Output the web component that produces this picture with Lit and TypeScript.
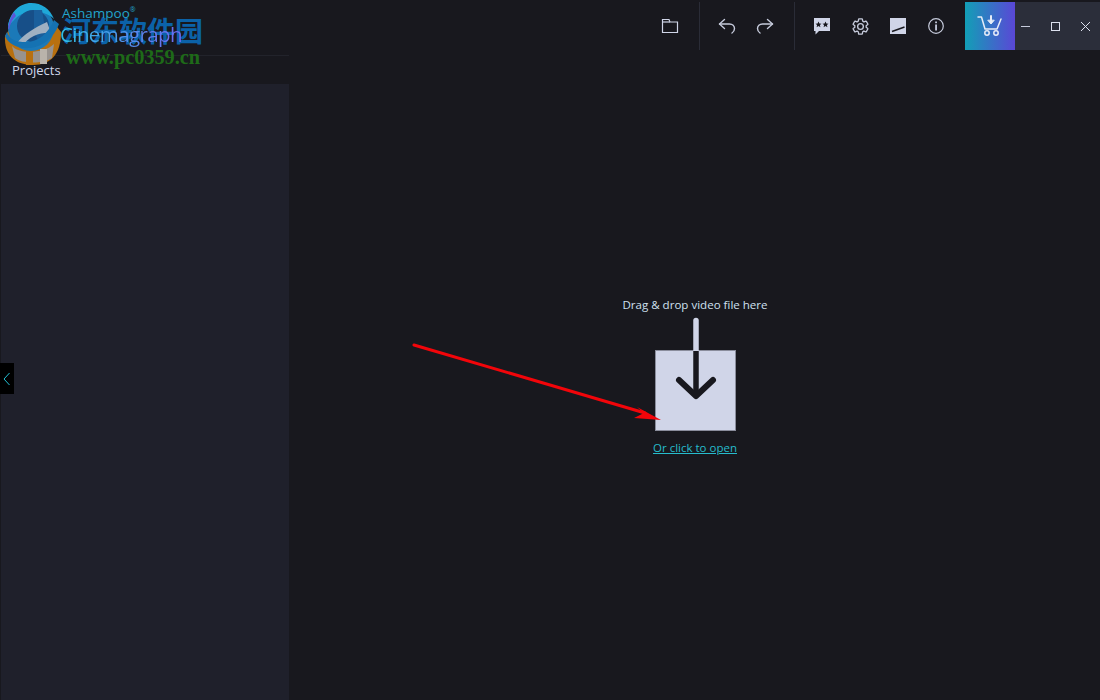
import { LitElement, html, css, svg } from "lit";
import { customElement } from "lit/decorators.js";

const ink = "#d0d5e8";

@customElement("app-root")
export class AppRoot extends LitElement {
  static styles = css`
    :host {
      display: block;
      position: relative;
      width: 1100px;
      height: 700px;
      overflow: hidden;
      background: #18181e;
      color: #d0d5e8;
      font-family: "Open Sans", "Noto Sans", sans-serif;
    }
    .app { display: flex; flex-direction: column; height: 700px; }
    .top { display: flex; height: 50px; padding-top: 2px; box-sizing: border-box; flex: none; }
    .brand { width: 289px; flex: none; }
    .spacer { flex: 1; }
    .tools { display: flex; align-items: stretch; }
    .tool { width: 38px; height: 48px; display: flex; align-items: center; justify-content: center; }
    .tool svg { display: block; }
    .sep { width: 1px; background: #2a2c37; height: 48px; margin: 0 8px 0 10px; }
    .cart {
      width: 50px; height: 48px; margin-left: 10px;
      background: linear-gradient(90deg, #129fb6, #5a47d6);
      display: flex; align-items: center; justify-content: center;
    }
    .win { width: 85px; height: 48px; background: #2b2e3a; display: flex; }
    .win div { width: 30px; display: flex; align-items: center; justify-content: center; }
    .win div:first-child { width: 20px; margin-right: 5px; }
    .body { flex: 1; display: flex; min-height: 0; }
    .side { width: 289px; flex: none; display: flex; flex-direction: column; padding-left: 1px; box-sizing: border-box; }
    .tabs { height: 29px; flex: none; border-top: 1px solid #22232b; margin-top: 5px; box-sizing: border-box; font-size: 13px; padding: 5px 0 0 11px; line-height: 18px; color: #cfd6ea; }
    .list { flex: 1; background: #1f202b; }
    .main { flex: 1; display: flex; flex-direction: column; align-items: center; padding: 247px 0 0 0; box-sizing: border-box; margin-left: 1px; }
    .hint { font-size: 11.55px; line-height: 16px; color: #cfe0f0; width: 200px; text-align: center; }
    .drop { width: 81px; height: 81px; margin-top: 37px; background: #d0d5e8; position: relative; box-sizing: border-box; border: 1px solid #8a8d9c; }
    .drop svg { position: absolute; left: 10px; top: -33px; overflow: visible; }
    .open { margin-top: 9px; font-size: 11.5px; line-height: 16px; color: #26bccd; text-decoration: underline; }
    .collapse { position: absolute; left: 0; top: 363px; width: 14px; height: 31px; background: #000; display: flex; align-items: center; justify-content: center; }
    .logo { position: absolute; left: 4px; top: 2px; }
    .ashampoo { position: absolute; left: 62px; top: 4px; font-size: 13.5px; line-height: 18px; color: #22a4cc; font-weight: 400; }
    .ashampoo sup { font-size: 7px; vertical-align: 6px; line-height: 0; }
    .cine {
      position: absolute; left: 60px; top: 20px; font-size: 20.5px; line-height: 28px; font-weight: 400; letter-spacing: -0.6px;
      background: linear-gradient(90deg, #2fc0e4, #7068f2);
      -webkit-background-clip: text; background-clip: text; color: transparent;
    }
    .wm-cn { position: absolute; left: 63px; top: 12px; font-family: "Noto Sans CJK SC", sans-serif; font-size: 28px; line-height: 36px; font-weight: 700; color: #0b62a8; }
    .wm-url { position: absolute; left: 66px; top: 46px; font-family: "Liberation Serif", serif; font-size: 20.3px; line-height: 22px; font-weight: 700; color: #1e6a18; }
    .arrow { position: absolute; left: 0; top: 0; pointer-events: none; }
  `;

  render() {
    return html`
      <div class="app">
        <div class="top">
          <div class="brand"></div>
          <div class="spacer"></div>
          <div class="tools">
            <div class="tool"><svg width="18" height="16" viewBox="0 0 18 16" fill="none" stroke="${ink}" stroke-width="1.2"><path d="M1.5 14.5V1.5H8L9 4H16.5V14.5Z"/><path d="M1.5 4H9"/></svg></div>
            <div class="sep"></div>
            <div class="tool"><svg width="18" height="16" viewBox="0 0 18 16" fill="none" stroke="#c6cbdc" stroke-width="1.4" stroke-linecap="round" stroke-linejoin="round"><path d="M6.5 1.500L1.500 6L6.500 10.500"/><path d="M1.500 6H11.500C14.500 6 16.500 8 16.500 10.500C16.500 12.500 15.500 14 14 15"/></svg></div>
            <div class="tool"><svg width="18" height="16" viewBox="0 0 18 16" fill="none" stroke="#c6cbdc" stroke-width="1.4" stroke-linecap="round" stroke-linejoin="round"><path d="M11.500 1.500L16.500 6L11.500 10.500"/><path d="M16.500 6H6.500C3.500 6 1.500 8 1.500 10.500C1.500 12.500 2.500 14 4 15"/></svg></div>
            <div class="sep"></div>
            <div class="tool"><svg width="16" height="17" viewBox="0 0 16 17"><path fill="${ink}" d="M0 0H16V13H5L1.500 16.500V13H0Z"/><path fill="#18181e" d="M4.500 3.500L5.400 5.500L7.500 5.700L5.900 7.100L6.400 9.200L4.500 8.100L2.600 9.200L3.100 7.100L1.500 5.700L3.600 5.500ZM11.500 3.500L12.400 5.500L14.500 5.700L12.900 7.100L13.400 9.200L11.500 8.100L9.600 9.200L10.100 7.100L8.500 5.700L10.600 5.500Z"/></svg></div>
            <div class="tool"><svg width="19" height="19" viewBox="0 0 24 24" fill="none" stroke="#c6cbdc" stroke-width="1.700" stroke-linejoin="round"><circle cx="12" cy="12" r="3.600"/><path d="M19.140 12.940c.04-.3.06-.61.06-.94 0-.32-.02-.64-.07-.94l2.030-1.580a.49.49 0 0 0 .12-.61l-1.920-3.320a.488.488 0 0 0-.59-.22l-2.390.96c-.5-.38-1.030-.7-1.620-.94l-.36-2.540a.484.484 0 0 0-.48-.41h-3.840c-.24 0-.43.17-.47.41l-.36 2.540c-.59.24-1.130.57-1.620.94l-2.390-.96c-.22-.08-.47 0-.59.22L2.740 8.870c-.12.21-.08.47.12.61l2.030 1.580c-.05.3-.09.63-.09.94s.02.64.07.94l-2.030 1.580a.49.49 0 0 0-.12.61l1.920 3.320c.12.22.37.29.59.22l2.390-.96c.5.38 1.030.7 1.620.94l.36 2.540c.05.24.24.41.48.41h3.840c.24 0 .44-.17.47-.41l.36-2.540c.59-.24 1.130-.56 1.620-.94l2.390.96c.22.08.47 0 .59-.22l1.920-3.320c.12-.22.07-.47-.12-.61l-2.010-1.580z"/></svg></div>
            <div class="tool"><svg width="16" height="16" viewBox="0 0 16 16"><rect width="16" height="16" fill="${ink}"/><path d="M2 13.500L14.500 9" stroke="#18181e" stroke-width="1.500"/></svg></div>
            <div class="tool"><svg width="16" height="16" viewBox="0 0 16 16" fill="none"><circle cx="8" cy="8" r="7.300" stroke="#c6cbdc" stroke-width="1.200"/><rect x="7.200" y="3.500" width="1.700" height="1.700" fill="${ink}"/><rect x="7.200" y="6.500" width="1.700" height="6" fill="${ink}"/></svg></div>
          </div>
          <div class="cart"><svg width="26" height="22" viewBox="0 0 26 22" fill="none" stroke="#e6ecf8" stroke-width="1.500" stroke-linecap="round" stroke-linejoin="round"><path d="M1 2H4.500L8 14H20L24 4"/><circle cx="10" cy="18" r="2.200"/><circle cx="19" cy="18" r="2.200"/><path d="M14 1V7" stroke-width="2"/><path d="M11 5.500L14 9L17 5.500Z" fill="#e6ecf8" stroke-width="1"/></svg></div>
          <div class="win">
            <div><svg width="11" height="3" viewBox="0 0 11 3"><path d="M1 1.500H10" stroke="#c6cbdc" stroke-width="1"/></svg></div>
            <div><svg width="11" height="11" viewBox="0 0 11 11" fill="none"><rect x="1.500" y="1.500" width="8" height="8" stroke="#dde1ee" stroke-width="1"/></svg></div>
            <div><svg width="11" height="11" viewBox="0 0 11 11" fill="none"><path d="M1 1L10 10M10 1L1 10" stroke="#dde1ee" stroke-width="1"/></svg></div>
          </div>
        </div>
        <div class="body">
          <div class="side">
            <div class="tabs">Projects</div>
            <div class="list"></div>
          </div>
          <div class="main">
            <div class="hint">Drag &amp; drop video file here</div>
            <div class="drop">
              <svg width="60" height="90" viewBox="0 0 60 90" fill="none" stroke-linecap="round" stroke-linejoin="round">
                <path d="M30 2.500V33" stroke="${ink}" stroke-width="5.500"/>
                <path d="M30 33V78" stroke="#18181e" stroke-width="5.500" stroke-linecap="butt"/>
                <path d="M13 62L30 78L47 62" stroke="#18181e" stroke-width="6"/>
              </svg>
            </div>
            <div class="open">Or click to open</div>
          </div>
        </div>
      </div>
      <div class="collapse"><svg width="8" height="14" viewBox="0 0 8 14" fill="none"><path d="M6.500 1L1 7L6.500 13" stroke="#22c0d4" stroke-width="1"/></svg></div>
      <svg class="logo" width="58" height="66" viewBox="0 0 58 66" fill="none">
        ${svg`
          <path d="M1 34C0 52 10 63 29 63C47 63 57 52 57 30L46 16L10 20Z" fill="#b8700f"/>
          <path d="M8 44C14 52 40 52 50 42L48 56C40 62 18 62 11 56Z" fill="#98938f"/>
          <rect x="22" y="48" width="7" height="15" fill="#b8700f"/>
          <rect x="36" y="47" width="7" height="15" fill="#b9b3ab"/>
          <circle cx="27" cy="26" r="23" fill="#1b79b8"/>
          <path d="M4 24C6 10 16 1 27 1C38 1 46 7 50 17C40 7 20 7 11 17Z" fill="#1fa8d8"/>
          <path d="M4 26C5 20 7 14 10 10L12 14C8 18 6 22 5 28Z" fill="#5b57d8"/>
          <circle cx="29" cy="24" r="16" fill="#174f88"/>
          <path d="M30 8H38L42 32L34 38L30 30Z" fill="#1a5f9c"/>
          <path d="M13 41C20 32 30 26 43 20L47 31C38 30 24 34 18 45Z" fill="#9fb0c2"/>
          <path d="M1 34C4 42 14 47 26 46C38 45 50 36 55 22L50 18C44 32 34 40 22 40C12 40 6 38 3 30Z" fill="#1572b2"/>
        `}
      </svg>
      <div class="wm-cn">河东软件园</div>
      <div class="wm-url">www.pc0359.cn</div>
      <div class="ashampoo">Ashampoo<sup>®</sup></div>
      <div class="cine">Cinemagraph</div>
      <svg class="arrow" width="1100" height="700" viewBox="0 0 1100 700" fill="none">
        <path d="M414 345L645 413" stroke="#f2050a" stroke-width="3" stroke-linecap="round"/>
        <path d="M637 407L661 420L634 418L644 413Z" fill="#f2050a"/>
      </svg>
    `;
  }
}
